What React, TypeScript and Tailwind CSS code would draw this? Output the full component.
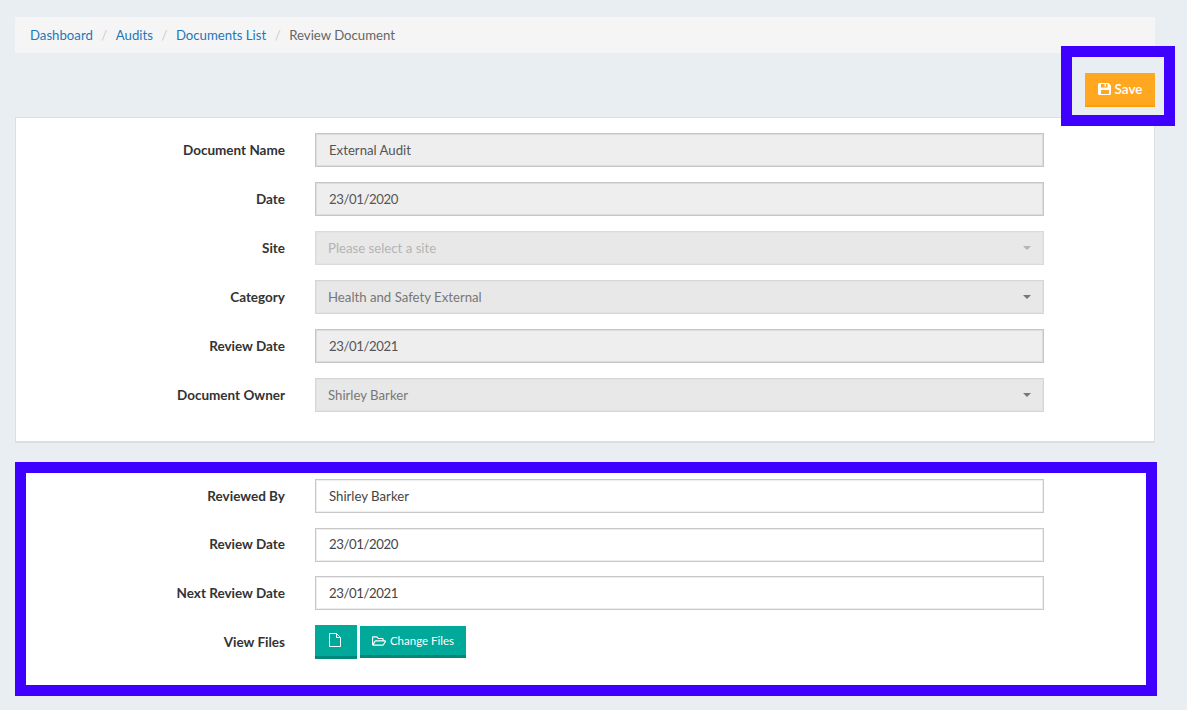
import React from 'react';
import { FaRegFolderOpen } from 'react-icons/fa';

type FieldKind = 'readonly' | 'select' | 'empty-select' | 'text';

interface RowProps {
  label: string;
  value: string;
  kind: FieldKind;
}

const fieldStyles: Record<FieldKind, string> = {
  readonly: 'bg-[#eeeeee] border-[#c6c6c6] text-[#555555] pl-[13px] shadow-[inset_0_0_0_1px_#dddddd]',
  select: 'bg-[#e8e8e8] border-[#d6d6d6] text-[#777777] pl-3 shadow-[inset_0_0_0_1px_#e2e2e2]',
  'empty-select': 'bg-[#e8e8e8] border-[#dadada] text-[#b4b4b4] pl-3 shadow-[inset_0_0_0_1px_#e3e3e3]',
  text: 'bg-white border-[#c8c8c8] text-[#444444] pl-[13px] shadow-[inset_0_0_0_1px_#eeeeee]',
};

function SaveIcon() {
  return (
    <svg viewBox="0 0 14 14" className="h-[14px] w-[14px]" fill="currentColor">
      <path
        fillRule="evenodd"
        d="M1.5 1H10.5L13 3.5V11.5A1.5 1.5 0 0 1 11.500 13H1.500A1.500 1.500 0 0 1 0 11.500V2.500A1.500 1.500 0 0 1 1.500 1ZM3 2V5.500H9.500V2H8V4.500H6.500V2ZM3 8V12H11V8Z"
      />
    </svg>
  );
}

function FileIcon() {
  return (
    <svg viewBox="0 0 12 14" className="h-[14px] w-3" fill="none" stroke="currentColor" strokeWidth="1">
      <path d="M.5.5H7.500L11.500 4.500V13.500H.5Z" />
      <path d="M7.500.5V4.500H11.500" />
    </svg>
  );
}

function Row({ label, value, kind }: RowProps) {
  const isSelect = kind === 'select' || kind === 'empty-select';
  return (
    <div className="flex items-center">
      <label className="w-[269px] text-right font-bold text-[#333333]">{label}</label>
      <div className={`ml-[30px] flex h-[34px] w-[729px] items-center justify-between border pr-3 text-[13.2px] ${fieldStyles[kind]}`}>
        <span className={/^\d/.test(value) ? 'pt-px tracking-[-0.4px]' : 'pt-px'}>{value}</span>
        {isSelect && (
          <span className={`h-0 w-0 border-x-4 border-t-4 border-x-transparent ${kind === 'select' ? 'border-t-[#777777]' : 'border-t-[#b4b4b4]'}`} />
        )}
      </div>
    </div>
  );
}

const documentRows: RowProps[] = [
  { label: 'Document Name', value: 'External Audit', kind: 'readonly' },
  { label: 'Date', value: '23/01/2020', kind: 'readonly' },
  { label: 'Site', value: 'Please select a site', kind: 'empty-select' },
  { label: 'Category', value: 'Health and Safety External', kind: 'select' },
  { label: 'Review Date', value: '23/01/2021', kind: 'readonly' },
  { label: 'Document Owner', value: 'Shirley Barker', kind: 'select' },
];

const reviewRows: RowProps[] = [
  { label: 'Reviewed By', value: 'Shirley Barker', kind: 'text' },
  { label: 'Review Date', value: '23/01/2020', kind: 'text' },
  { label: 'Next Review Date', value: '23/01/2021', kind: 'text' },
];

export default function App() {
  return (
    <div className="h-[710px] overflow-hidden bg-[#e9eef3] pl-[15px] pt-[17px] font-['Lato',sans-serif] text-[13.5px]">
      <nav className="flex h-9 w-[1140px] items-center bg-[#f5f5f5] pl-[15px] pt-px text-[13.2px] text-[#666666]">
        <a className="text-[#1f77bb]">Dashboard</a>
        <span className="mx-[8.5px] text-[#cccccc]">/</span>
        <a className="text-[#1f77bb]">Audits</a>
        <span className="mx-[8.5px] text-[#cccccc]">/</span>
        <a className="text-[#1f77bb]">Documents List</a>
        <span className="mx-[8.5px] text-[#cccccc]">/</span>
        <span>Review Document</span>
      </nav>

      <div className="flex h-16 w-[1140px] items-start justify-end pt-5">
        <div className="relative">
          <button className="flex h-[34px] w-[70px] items-center justify-center gap-[3px] border-b-2 border-[#ff9f00] bg-[#ffa81f] font-semibold text-white">
            <SaveIcon />
            Save
          </button>
          <div className="pointer-events-none absolute -bottom-[19px] -left-[24px] -right-[20px] -top-[27px] border-[11px] border-[#3f00ff]" />
        </div>
      </div>

      <section className="flex h-[326px] w-[1140px] flex-col gap-[15px] border border-b-2 border-[#dcdfe2] bg-white pt-[15px]">
        {documentRows.map((row) => (
          <Row key={row.label} {...row} />
        ))}
      </section>

      <section className="mt-[19px] flex h-[234px] w-[1142px] flex-col gap-[14.6px] border-[11px] border-[#3f00ff] bg-white pt-1.5 [&>div>label]:-ml-[10px] [&>div>div]:ml-[30px]">
        {reviewRows.map((row) => (
          <Row key={row.label} {...row} />
        ))}
        <div className="flex items-center">
          <label className="w-[269px] text-right font-bold text-[#333333]">View Files</label>
          <div className="ml-[30px] flex w-[729px] items-start gap-[3px]">
            <button className="flex h-[34px] w-[42px] items-center justify-center border-b-[3px] border-[#00897b] bg-[#00a99a] pr-[3px] text-white">
              <FileIcon />
            </button>
            <button className="mt-px flex h-8 w-[106px] items-center justify-center gap-1 border-b-[3px] border-[#00897b] bg-[#00a99a] pt-px text-[11.5px] text-white">
              <FaRegFolderOpen className="text-sm" />
              Change Files
            </button>
          </div>
        </div>
      </section>
    </div>
  );
}
